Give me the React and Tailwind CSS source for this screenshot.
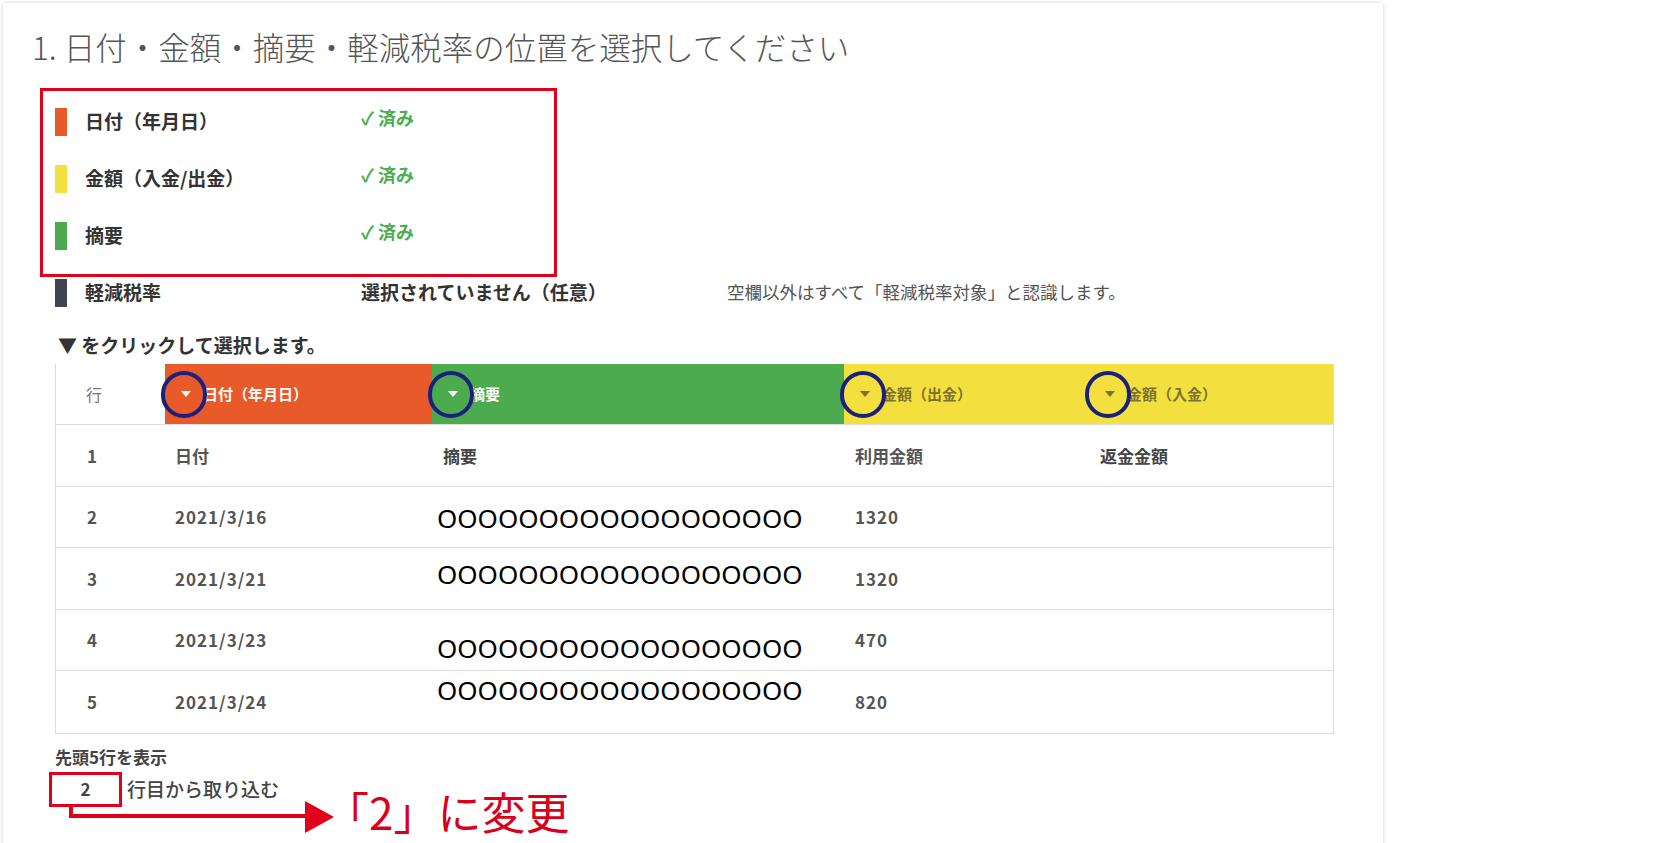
import React from "react";

const legend = [
  { bar: "bg-[#e95a2a]", label: "日付（年月日）", done: true },
  { bar: "bg-[#f3e03f]", label: "金額（入金/出金）", done: true },
  { bar: "bg-[#4caa4f]", label: "摘要", done: true },
  { bar: "bg-[#3f4450]", label: "軽減税率", done: false },
];

const headers = [
  { label: "日付（年月日）", cell: "bg-[#e95a2a] text-white", caret: "border-t-white" },
  { label: "摘要", cell: "bg-[#4caa4f] text-white", caret: "border-t-white" },
  { label: "金額（出金）", cell: "bg-[#f3e03f] text-[#7d7033]", caret: "border-t-[#7d7033]" },
  { label: "金額（入金）", cell: "bg-[#f3e03f] text-[#7d7033]", caret: "border-t-[#7d7033]" },
];

const rows = [
  { no: "1", date: "日付", memo: "摘要", out: "利用金額", inn: "返金金額" },
  { no: "2", date: "2021/3/16", memo: "OOOOOOOOOOOOOOOOOO", out: "1320", inn: "", shift: "translate-y-[1px]" },
  { no: "3", date: "2021/3/21", memo: "OOOOOOOOOOOOOOOOOO", out: "1320", inn: "", shift: "-translate-y-[4px]" },
  { no: "4", date: "2021/3/23", memo: "OOOOOOOOOOOOOOOOOO", out: "470", inn: "", shift: "translate-y-[8px]" },
  { no: "5", date: "2021/3/24", memo: "OOOOOOOOOOOOOOOOOO", out: "820", inn: "", shift: "-translate-y-[12px]" },
];

const Caret = ({ color }) => (
  <span className={`block w-0 h-0 border-l-[5px] border-r-[5px] border-t-[6px] border-l-transparent border-r-transparent ${color}`} />
);

const App = () => {
  return (
    <div className="w-full h-screen bg-white overflow-hidden pt-[3px] pl-[3px] font-['Noto_Sans_CJK_JP','Noto_Sans',sans-serif]">
      <div className="w-[1380px] h-[900px] bg-white shadow-[0_0_4px_rgba(0,0,0,0.18)] pt-[21px]">
        {/* title */}
        <h1 className="ml-[29px] text-[31.5px] leading-[45px] font-light text-[#555]">
          1. 日付・金額・摘要・軽減税率の位置を選択してください
        </h1>

        {/* legend */}
        <div className="relative ml-[52px] mt-[24px]">
          {legend.map((item) => (
            <div key={item.label} className="flex items-center h-[57px]">
              <span className={`w-[12px] h-[28px] ${item.bar}`} />
              <span className="ml-[18px] w-[276px] text-[19px] font-bold text-[#333]">{item.label}</span>
              {item.done ? (
                <span className="-mt-[8px] text-[18px] font-bold text-[#4cae50]">✓ 済み</span>
              ) : (
                <>
                  <span className="w-[366px] text-[19px] font-bold text-[#333]">選択されていません（任意）</span>
                  <span className="text-[17.5px] text-[#555]">空欄以外はすべて「軽減税率対象」と認識します。</span>
                </>
              )}
            </div>
          ))}
          <div className="absolute -left-[15px] -top-[5px] w-[517px] h-[189px] border-[3px] border-[#e0001b]" />
        </div>

        <p className="ml-[55px] mt-[10px] text-[19px] leading-[27px] font-bold text-[#333]">▼ をクリックして選択します。</p>

        {/* table */}
        <div className="ml-[52px] mt-[6px] w-[1279px] border-x border-b border-[#dcdcdc]">
          <div className="grid grid-cols-[109px_267px_412px_245px_1fr] h-[61px] border-b border-[#dcdcdc]">
            <div className="flex items-center pl-[30px] text-[16px] text-[#777]">行</div>
            {headers.map((h) => (
              <div key={h.label} className={`relative flex items-center pl-[16px] ${h.cell}`}>
                <Caret color={h.caret} />
                <span className="ml-[12px] text-[15px] font-bold">{h.label}</span>
                <span className="absolute -left-[4px] top-[7px] w-[46px] h-[47px] rounded-full border-[4px] border-[#1b1f7e]" />
              </div>
            ))}
          </div>
          {rows.map((r, i) => (
            <div
              key={r.no}
              className={`grid grid-cols-[109px_267px_412px_245px_1fr] h-[61.5px] text-[17px] font-bold text-[#444] ${i < rows.length - 1 ? "border-b border-[#dcdcdc]" : ""}`}
            >
              <div className="flex items-center pl-[31px] text-[#555]">{r.no}</div>
              <div className={`flex items-center pl-[10px] text-[#555] ${r.shift ? "tracking-[1px]" : ""}`}>{r.date}</div>
              <div className="flex items-center pl-[11px]">
                {r.shift ? (
                  <span className={`-ml-[6px] font-['Noto_Sans',sans-serif] font-normal text-[26px] leading-none text-black ${r.shift}`}>{r.memo}</span>
                ) : (
                  r.memo
                )}
              </div>
              <div className={`flex items-center pl-[11px] text-[#555] ${r.shift ? "tracking-[1px]" : ""}`}>{r.out}</div>
              <div className="flex items-center pl-[11px]">{r.inn}</div>
            </div>
          ))}
        </div>

        <p className="ml-[52px] mt-[11px] text-[17px] leading-[24px] font-bold text-[#444]">先頭5行を表示</p>

        {/* start row input */}
        <div className="relative ml-[46px] mt-[3px] flex items-center">
          <div className="w-[73px] h-[35px] border-[3px] border-[#e0001b] flex items-center justify-center text-[17px] font-bold text-[#444]">
            2
          </div>
          <span className="ml-[5px] text-[19px] font-medium text-[#444]">行目から取り込む</span>
          <svg className="absolute left-0 top-0" width="300" height="70" viewBox="0 0 300 70">
            <path d="M22 33 V44 H258" fill="none" stroke="#e0001b" strokeWidth="4" />
            <polygon points="256,29 285,45 256,61" fill="#e0001b" />
          </svg>
          <span className="absolute left-[276px] top-[17px] text-[44px] leading-none text-[#d9001b] whitespace-nowrap">「2」に変更</span>
        </div>
      </div>
    </div>
  );
};

export default App;
